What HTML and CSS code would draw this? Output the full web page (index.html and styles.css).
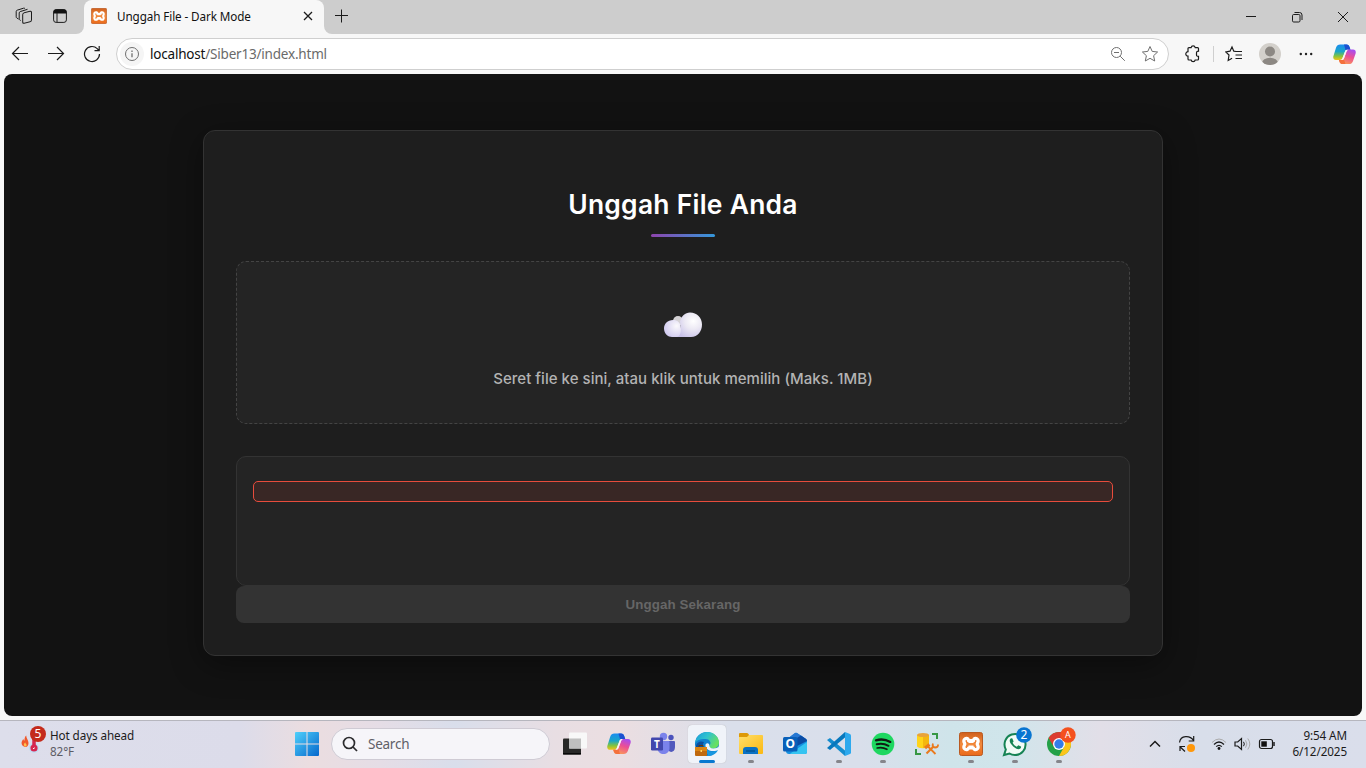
FILE: index.html
```html
<!DOCTYPE html>
<html lang="id">
<head>
<meta charset="utf-8">
<title>Unggah File - Dark Mode</title>
<link rel="stylesheet" href="styles.css">
</head>
<body>
<svg class="defs" width="0" height="0" aria-hidden="true">
  <defs>
    <linearGradient id="copA" x1="0" y1="0" x2="0" y2="1"><stop offset="0" stop-color="#1b8cf0"/><stop offset=".45" stop-color="#1aa6c8"/><stop offset=".75" stop-color="#86c43c"/><stop offset="1" stop-color="#f4c418"/></linearGradient>
    <linearGradient id="copB" x1=".7" y1="0" x2=".3" y2="1"><stop offset="0" stop-color="#a84cf0"/><stop offset=".45" stop-color="#ec4f94"/><stop offset="1" stop-color="#fb9c55"/></linearGradient>
    <linearGradient id="xam" x1="0" y1="0" x2="0" y2="1"><stop offset="0" stop-color="#cf5f1d"/><stop offset=".5" stop-color="#f28a3c"/><stop offset="1" stop-color="#ea6a1a"/></linearGradient>
    <linearGradient id="win" x1="0" y1="0" x2="1" y2="1"><stop offset="0" stop-color="#4fd0fb"/><stop offset="1" stop-color="#0667cc"/></linearGradient>
    <linearGradient id="edgeTop" x1="0" y1="0" x2="1" y2=".5"><stop offset="0" stop-color="#1a9bd8"/><stop offset=".5" stop-color="#2fc2cf"/><stop offset="1" stop-color="#68e060"/></linearGradient>
    <linearGradient id="fold" x1="0" y1="0" x2="1" y2="1"><stop offset="0" stop-color="#ffdf6b"/><stop offset="1" stop-color="#fbb811"/></linearGradient>
    <radialGradient id="cloudR" cx=".65" cy=".35" r=".75"><stop offset="0" stop-color="#fff"/><stop offset=".45" stop-color="#ece9f4"/><stop offset="1" stop-color="#c9c2e9"/></radialGradient>
    <radialGradient id="cloudL" cx=".7" cy=".35" r=".8"><stop offset="0" stop-color="#fbfafc"/><stop offset="1" stop-color="#cdc6ee"/></radialGradient>
    <symbol id="copilot" viewBox="0 0 24 24">
      <path d="M7.500 1.500H14c2 0 2.800 1.200 3.400 3l.8 2.500h-3.400c-1.400 0-2 .7-2.400 2L10 15.500c-.6 1.700-1.300 2.300-3 2.300H3C.8 17.800-.2 16 .4 13.700l2.800-9C4 2.500 5.200 1.500 7.500 1.500z" fill="url(#copA)"/>
      <path d="M11.500 1.500H14c2 0 2.800 1.200 3.400 3l.8 2.500h-3.400c-.8 0-1.300.2-1.700.6z" fill="#1c50d0"/>
      <path d="M16.500 22H10c-2 0-2.800-1.200-3.400-3l-.4-1.300h3c1.400 0 2-.7 2.400-2l2.400-6.500c.6-1.700 1.300-2.300 3-2.300h4c2.200 0 3.200 1.800 2.600 4.100l-2.800 8C20 21 18.800 22 16.500 22z" fill="url(#copB)"/>
      <path d="M10 22c-2 0-2.800-1.200-3.400-3l-.4-1.300h3c1 0 1.700-.4 2-1.200L13 22z" fill="#f4703c"/>
      <path d="M13 7.800c.5-.6 1-.8 2-.8h1.200c-1.200.3-1.800 1-2.200 2.200l-2.700 7.400c-.4.900-1 1.200-2.100 1.200H8.200c1-.3 1.500-1 1.800-2.200z" fill="#fbf4f6"/>
    </symbol>
    <symbol id="xampp" viewBox="0 0 24 24">
      <rect x=".5" y=".5" width="23" height="23" rx="2" fill="url(#xam)" stroke="#b95a22"/>
      <path d="M8.500 6.500c-2.600-.8-4.700 1.700-3 4.500q.7 1 0 2c-1.700 2.800.4 5.300 3 4.500q.7-.2 1-1.500h5q.3 1.300 1 1.500c2.600.8 4.700-1.700 3-4.500q-.7-1 0-2c1.700-2.800-.4-5.300-3-4.500q-.7.200-1 2.200h-5q-.3-2-1-2.200z" fill="none" stroke="#fff" stroke-width="3.200" stroke-linejoin="round"/>
      <path d="M9.500 9.500h5M9.500 15h5" stroke="#fff" stroke-width="3"/>
    </symbol>
  </defs>
</svg>

<header class="tabstrip">
  <div class="strip-left">
    <svg width="18" height="18" viewBox="0 0 18 18" class="ln"><rect x="7.700" y="5" width="8.800" height="10.500" rx="1.500" transform="skewY(-14) translate(0 3)"/><path d="M5.700 13.500l-1-.6q-.5-.4-.5-1V6q0-1 1-1.400l7.300-2.300M3.500 12l-1.700-1q-.6-.4-.6-1.200V4.500q0-1 1-1.300l6.300-2q.8-.2 1.500.3"/></svg>
    <svg width="16" height="16" viewBox="0 0 16 16"><rect x="1.600" y="1.600" width="12.800" height="12.800" rx="2.500" class="ln"/><path d="M1.500 5.500V4A2.500 2.500 0 014 1.500h8A2.500 2.500 0 0114.500 4v1.500z" fill="#111"/><path d="M5 5v9" class="ln"/></svg>
  </div>
  <div class="tab">
    <svg width="16" height="16"><use href="#xampp"/></svg>
    <span class="tab-title">Unggah File - Dark Mode</span>
    <svg width="10" height="10" viewBox="0 0 10 10" class="ln"><path d="M1 1l8 8M9 1L1 9" stroke-width="1.300"/></svg>
  </div>
  <svg class="plus ln" width="14" height="14" viewBox="0 0 14 14"><path d="M6.500 .5v13M0 6.500h13"/></svg>
  <div class="win-btns">
    <svg width="12" height="12" viewBox="0 0 12 12" class="ln"><path d="M1 5.500h10"/></svg>
    <svg width="12" height="12" viewBox="0 0 12 12" class="ln"><rect x="1.500" y="3.500" width="7.500" height="7.500" rx="1.200"/><path d="M3.500 1.500h5q2.500 0 2.500 2.500v5"/></svg>
    <svg width="12" height="12" viewBox="0 0 12 12" class="ln"><path d="M1 1l10 10M11 1L1 11"/></svg>
  </div>
</header>

<nav class="toolbar">
  <div class="nav-btns">
    <svg width="18" height="16" viewBox="0 0 18 16" class="ln"><path d="M17 7.500H1.500M8 1L1.500 7.500 8 14" stroke-width="1.200"/></svg>
    <svg width="18" height="16" viewBox="0 0 18 16" class="ln"><path d="M1 7.500h15.500M10 1l6.500 6.500L10 14" stroke-width="1.200"/></svg>
    <svg width="18" height="18" viewBox="0 0 18 18" class="ln"><path d="M16.500 9a7.500 7.500 0 11-2.300-5.400L16 5.500M16.200 1v4.700h-4.700" stroke-width="1.200"/></svg>
  </div>
  <div class="address">
    <span class="site-info"><svg width="16" height="16" viewBox="0 0 16 16" class="ln grey"><circle cx="8" cy="8" r="6.500"/><path d="M8 7.300v4M8 4.600v1.300" stroke-width="1.300"/></svg></span>
    <span class="url">localhost<span class="path">/Siber13/index.html</span></span>
    <svg width="16" height="16" viewBox="0 0 16 16" class="ln grey"><circle cx="6.500" cy="6.500" r="5"/><path d="M10.200 10.200l4.600 4.600M4 6.500h5"/></svg>
    <svg width="18" height="18" viewBox="0 0 18 18" class="ln grey"><path d="M9 1.500l2.200 4.900 5.400.6-4 3.700 1.100 5.300L9 13.300 4.300 16l1.100-5.300-4-3.700 5.400-.6z" stroke-linejoin="round"/></svg>
  </div>
  <div class="tools">
    <svg width="18" height="18" viewBox="0 0 18 18" class="ln"><path d="M4 3.500q0-.9.900-.9h2.200a2.100 2.100 0 014.100 0h2.400q.9 0 .9.900v2.700a1.600 1.600 0 00-2 1.500v2.200a1.600 1.600 0 002 1.500v2.700q0 .9-.9.900h-2.400a2.100 2.100 0 01-4.100 0H4.900q-.9 0-.9-.9v-3a2.200 2.200 0 010-4.400z" stroke-width="1.200"/></svg>
    <i class="divider"></i>
    <svg width="18" height="18" viewBox="0 0 18 18" class="ln"><path d="M11 6.500L8.800 6.200 7 2 5 6.200l-4.300.7L4 10l-.8 5.500 3.900-2.200M10 6.500h7M10.500 10H17M10.500 13.500H17" stroke-width="1.200"/></svg>
    <svg width="22" height="22" viewBox="0 0 22 22"><clipPath id="av"><circle cx="11" cy="11" r="11"/></clipPath><circle cx="11" cy="11" r="11" fill="#d3d0cb"/><g fill="#8c8883" clip-path="url(#av)"><circle cx="11" cy="8.500" r="5"/><ellipse cx="11" cy="20" rx="8" ry="5.300"/></g></svg>
    <svg width="14" height="4" viewBox="0 0 14 4" fill="#222"><circle cx="1.800" cy="2" r="1.200"/><circle cx="7" cy="2" r="1.200"/><circle cx="12.200" cy="2" r="1.200"/></svg>
    <svg width="23" height="23"><use href="#copilot"/></svg>
  </div>
</nav>

<main class="viewport">
  <section class="card">
    <h1>Unggah File Anda</h1>
    <div class="dropzone">
      <svg width="38" height="26" viewBox="0 0 38 26"><circle cx="14" cy="9" r="5" fill="#d5d2d5"/><path d="M8 25C4 25 0 21.500 0 16.500c0-4.500 3.500-8.500 9-8.500 4 0 8 2.500 8 8.500l1 8.500z" fill="url(#cloudL)"/><path d="M13 25c3-1 4-4 3.800-8L16 9.500C17.500 4 21 .5 26 .5c7 0 12 5 12 12C38 19 34 25 27 25z" fill="url(#cloudR)"/></svg>
      <p>Seret file ke sini, atau klik untuk memilih (Maks. 1MB)</p>
    </div>
    <div class="file-info"><div class="error"></div></div>
    <button class="upload" disabled>Unggah Sekarang</button>
  </section>
</main>

<footer class="taskbar">
  <div class="weather">
    <svg width="28" height="28" viewBox="0 0 28 28"><path d="M5.500 21C.5 20 .8 15.500 3.500 13c.1 1 .4 1.500 1 1.500C4.500 12 5 10.500 6.200 9.500c0 3 2.300 4.500 2.300 7.500 0 2-1 4-3 4z" fill="#f0592b"/><path d="M5.300 20.500c-2-.5-1.800-3 0-4 .2 1.500 1.500 1.500 1.300 2.800-.1.800-.6 1.200-1.300 1.200z" fill="#ffc14d"/><circle cx="14" cy="22" r="5" fill="#bfdcf4"/><path d="M14 11v11" stroke="#d6254f" stroke-width="3.500"/><circle cx="14" cy="22" r="3.600" fill="#d6254f"/><path d="M13 22.800l1.800-1" stroke="#fff"/><circle cx="18" cy="8" r="8" fill="#c42b1c"/><text x="18" y="12.200" class="badge-n">5</text></svg>
    <div class="weather-text"><b>Hot days ahead</b><span>82°F</span></div>
  </div>
  <svg class="start" width="24" height="24" viewBox="0 0 24 24"><path d="M0 1q0-1 1-1h10.500v11.500H0zM12.500 0H23q1 0 1 1v10.500H12.500zM0 12.500h11.500V24H1q-1 0-1-1zM12.500 12.500H24V23q0 1-1 1H12.500z" fill="url(#win)"/></svg>
  <div class="search"><svg width="16" height="16" viewBox="0 0 16 16" fill="none" stroke="#2b2b2d" stroke-width="1.700"><circle cx="7" cy="7" r="5.500"/><path d="M11 11l4 4"/></svg><span>Search</span></div>
  <div class="apps">
    <span class="app"><svg width="24" height="24" viewBox="0 0 24 24"><rect x="0" y="6.500" width="18" height="16" rx="1" fill="#282827"/><path d="M0 21h18v1.500H0z" fill="#080808"/><rect x="6" y=".5" width="18" height="16" rx="1" fill="#f8f8f8"/><path d="M6 6.500h12v10H6z" fill="#bfbfbf"/></svg></span>
    <span class="app"><svg width="24" height="24"><use href="#copilot"/></svg></span>
    <span class="app"><svg width="24" height="24" viewBox="0 0 24 24"><circle cx="20" cy="5.500" r="2.700" fill="#4b53bc"/><path d="M16 9h7q1 0 1 1v5c0 7-8 6-8 0z" fill="#5159bd"/><circle cx="12.500" cy="4.500" r="3.700" fill="#7b83eb"/><path d="M7 9h10.500q1 0 1 1v6c0 8-12 8-12 0z" fill="#7b83eb"/><rect y="5.500" width="12" height="13" rx="1.200" fill="#4248ae"/><text x="6" y="15.500" class="logo-letter" font-size="10">T</text></svg></span>
    <span class="app active"><svg width="24" height="24" viewBox="0 0 24 24"><circle cx="12" cy="12" r="12" fill="#1280cf"/><path d="M0 11C1 4 6 0 12 0c7 0 12 5 12 10.500 0 4-3 6-6.500 6-3 0-4.500-1.500-3-3 2.500-3 0-6.500-4-6.500C6 6.500 2 8 0 11z" fill="url(#edgeTop)"/><path d="M9 10c-3 5 0 10 6 12-5 3-12 1-14-5-1-5 3-9 8-7z" fill="#0b4fa0"/><path d="M11 11c-3 6 3 11 12 7-2 4-6 6-10 6l-2-5q-3-4 0-8z" fill="#1996df"/><path d="M10.800 12c1.500-1.500 3.500-.5 3.500 1 0 2 1 3.500 4 3.500 2.500 0 4.500-.7 5.500-2v3c-2 1.600-8 2.600-11 0-2-1.500-3-3.900-2-5.500z" fill="#f0f3f9"/><rect x="0" y="15" width="12" height="9" rx="1" fill="#bf690f"/><path d="M0 15h12v4H0z" fill="#db8514"/><path d="M4 15v-1.500h4V15" fill="none" stroke="#673809"/><path d="M5.500 18h1.500v2H5.500z" fill="#ffd267"/></svg></span>
    <span class="app run"><svg width="24" height="24" viewBox="0 0 24 24"><path d="M0 2q0-1 1-1h7q1 0 2 1.500V6H0z" fill="#dd9908"/><path d="M0 5h8l2-2h13q1 0 1 1v17q0 1-1 1H1q-1 0-1-1z" fill="url(#fold)"/><path d="M4 22v-4q0-3 3-3h9q3 0 3 3v4z" fill="#0b72c4"/><path d="M7 19h9" stroke="#075795" stroke-width="1.500"/></svg></span>
    <span class="app"><svg width="24" height="24" viewBox="0 0 24 24"><path d="M3 8l9-7q1-.6 2 0l9 6q1 .6 1 2v11q0 2-2 2H6q-3 0-3-3z" fill="#1490e0"/><path d="M4 7l8-6q1-.6 2 0l9 6-9 5z" fill="#2877d2"/><path d="M9 9l9-5.500 5 3.500q1 .6 1 2l-10 5z" fill="#0b4ca5"/><path d="M8 21l16-11v10q0 2-2 2H7z" fill="#35c4f1"/><rect y="5" width="14.500" height="14.500" rx="1.500" fill="#0960b9"/><text x="7.200" y="16.200" class="logo-letter" font-size="12">O</text></svg></span>
    <span class="app run"><svg width="24" height="24" viewBox="0 0 24 24"><path d="M0 8l3-2 15 12.500V24z" fill="#158dcf"/><path d="M0 16l3 2L18 5.500V0z" fill="#0878bd"/><path d="M18 0l5 2q1 .5 1 1.500v17q0 1-1 1.500l-5 2z" fill="#2da9ee"/></svg></span>
    <span class="app run"><svg width="24" height="24" viewBox="0 0 24 24"><circle cx="12" cy="12" r="11.300" fill="#1ed760"/><g fill="none" stroke="#101b13" stroke-linecap="round"><path d="M5 8.300c5-1.400 10-.8 14.300 1.600" stroke-width="2.300"/><path d="M5.700 12.300c4-1 8-.6 11.800 1.500" stroke-width="2"/><path d="M6.200 16c3.500-.8 6.500-.5 9.700 1.300" stroke-width="1.700"/></g></svg></span>
    <span class="app"><svg width="24" height="24" viewBox="0 0 24 24"><path d="M2 3v11c0 3 12 3 12 0V3z" fill="#ffd419"/><path d="M8 3v13c3 0 6-.7 6-2V3z" fill="#f4b70f"/><ellipse cx="8" cy="3" rx="6" ry="2" fill="#e8a33a"/><path d="M17 2h5v5M1 17v5h5" fill="none" stroke="#379744" stroke-width="2"/><g fill="none" stroke="#ea7a1d"><path d="M11.500 21.500l7.500-7.500" stroke-width="2.200"/><path d="M20.500 22L13 14.500" stroke-width="1.800"/><path d="M10 16l4.500-3.500" stroke-width="3"/><path d="M18 11.500q-1.300 4 2 4t3-3" stroke-width="1.800"/></g></svg></span>
    <span class="app run"><svg width="24" height="24"><use href="#xampp"/></svg></span>
    <span class="app run"><svg width="38" height="38" viewBox="-7 -7 38 38"><path d="M1 23l1.800-5.500A10.500 10.500 0 1112 23c-2 0-4-.5-5.500-1.500z" fill="#f1fbf6" stroke="#168354" stroke-width="2"/><path d="M8.300 6.300c-1.800.7-2.500 3 .2 6.200 3.200 4 6.500 5.400 8.500 4.300 1-.6 1.300-1.800 1-2.300l-2.700-1.300-1.500 1.500c-1.700-.6-3.300-2-4.200-3.900l1-1.300-1.200-2.900z" fill="#168354"/><circle cx="21" cy="3" r="7.800" fill="#0875d1"/><text x="21" y="7" class="badge-n">2</text></svg></span>
    <span class="app run"><svg width="38" height="38" viewBox="-7 -7 38 38"><circle cx="12" cy="12" r="12" fill="#24a148"/><path d="M12 12L1.600 6A12 12 0 0122.400 6z" fill="#dc3c31"/><path d="M12 12l10.400-6A12 12 0 0112 24z" fill="#fbc51a"/><path d="M1.600 6L12 24l5-9-5-3-5 3z" fill="#24a148"/><path d="M1.600 6h15L12 12l-5 3z" fill="#dc3c31"/><circle cx="12" cy="12" r="6" fill="#fff"/><circle cx="12" cy="12" r="4.700" fill="#347de8"/><circle cx="21" cy="3" r="7.700" fill="#f4511e"/><text x="21" y="6.300" class="badge-n small">A</text></svg></span>
  </div>
  <div class="tray">
    <svg width="12" height="8" viewBox="0 0 12 8" class="ln"><path d="M1 6.500l5-5 5 5" stroke-width="1.500"/></svg>
    <svg width="18" height="18" viewBox="0 0 18 18" class="ln"><path d="M1.500 7.500C2.500 0 12 0 15.500 5.500M15.700 1v5h-5M7 16.500L2 11.700M2 16v-4.500h5" stroke-width="1.200"/><circle cx="13" cy="13" r="4" fill="#ff980b" stroke="none"/></svg>
    <svg width="16" height="14" viewBox="0 0 16 14" class="ln"><path d="M1 5.500Q8-1.500 15 5.500" stroke="#aaa"/><path d="M3 7.500q5-5 10 0M5.200 9.700q2.800-2.800 5.600 0" stroke-width="1.200"/><circle cx="8" cy="11.500" r="1.400" fill="#111" stroke="none"/></svg>
    <svg width="18" height="14" viewBox="0 0 18 14" class="ln"><path d="M1 5h2.700L7.500 1.500v11L3.700 9H1z" stroke-width="1.200"/><path d="M9.500 4.800q1.700 2.200 0 4.400"/><path d="M11.500 3.300q2.800 3.700 0 7.400M13.800 1.500q4 5.500 0 11" stroke="#aaa"/></svg>
    <svg width="18" height="12" viewBox="0 0 18 12" class="ln"><rect x="1.500" y="1.500" width="13" height="9" rx="2" stroke-width="1.200"/><rect x="3.300" y="3.300" width="5.500" height="5.400" fill="#111" stroke="none"/><path d="M16 4v4" stroke-width="1.500"/></svg>
    <div class="clock"><span>9:54 AM</span><span>6/12/2025</span></div>
  </div>
</footer>
</body>
</html>
```
FILE: styles.css
```css
* { box-sizing: border-box; }
body {
  margin: 0;
  width: 1366px;
  height: 768px;
  overflow: hidden;
  display: flex;
  flex-direction: column;
  background: #f7f7f7;
  font-family: "Noto Sans", "Open Sans", sans-serif;
  font-size: 12px;
  color: #1b1b1b;
}
svg { display: block; flex: none; }
.defs { position: absolute; }
.ln { fill: none; stroke: #1b1b1b; }
.grey { stroke: #6f6f6f; }

.tabstrip { height: 34px; flex: none; display: flex; align-items: center; background: linear-gradient(90deg, #f7f7f7 340px, #cdcdcd 340px); }
.strip-left {
  width: 84px; height: 34px; padding: 0 0 2px 15px;
  display: flex; align-items: center; gap: 19px;
  background: #cdcdcd; border-bottom-right-radius: 8px;
}
.tab {
  width: 240px; height: 34px; padding: 0 11px 2px 7px;
  display: flex; align-items: center;
  background: #f7f7f7; border-radius: 8px 8px 0 0;
  box-shadow: 0 -8px 0 #cdcdcd;
}
.tab-title { flex: 1; padding-left: 10px; font-size: 11.700px; letter-spacing: -.1px; white-space: nowrap; color: #111; }
.plus { width: 42px; height: 34px; padding: 9px 17px 11px 11px; background: #cdcdcd; border-bottom-left-radius: 8px; }
.win-btns { margin-left: auto; display: flex; gap: 34px; padding-right: 17px; }

.toolbar { height: 40px; flex: none; display: flex; align-items: center; }
.nav-btns { width: 116px; padding-left: 11px; display: flex; align-items: center; gap: 18px; }
.address {
  width: 1053px; height: 32px; padding: 0 9px 0 3px;
  display: flex; align-items: center;
  background: #fff; border: 1px solid #cfcfcf; border-radius: 16px;
}
.site-info { width: 24px; height: 24px; display: flex; align-items: center; justify-content: center; background: #f5f5f5; border-radius: 12px; }
.url { flex: 1; padding-left: 6px; font-size: 13.500px; letter-spacing: -.2px; color: #111; }
.path { color: #6a6a6a; }
.address svg + svg { margin-left: 15px; }
.tools { display: flex; align-items: center; padding-left: 15px; }
.divider { width: 1px; height: 16px; margin: 0 11px; background: #cfcfcf; }
.tools svg + svg { margin-left: 16px; }
.tools svg:nth-of-type(4) { margin-left: 18px; }
.tools svg:nth-of-type(5) { margin-left: 20px; }

.viewport {
  width: 1358px; height: 642px; margin: 0 4px; padding-top: 56px; flex: none;
  display: flex; justify-content: center; align-items: flex-start;
  background: #121212; border-radius: 8px; overflow: hidden;
}
.card {
  width: 960px; height: 526px; padding: 55px 32px 32px;
  display: flex; flex-direction: column;
  background: #1e1e1e; border: 1px solid #333; border-radius: 12px;
  box-shadow: 0 8px 32px rgba(0, 0, 0, .4);
}
h1 {
  margin: 0 0 24px; height: 51px;
  display: flex; flex-direction: column; align-items: center; justify-content: space-between;
  font: 600 26.400px/36px Inter, sans-serif; letter-spacing: .28px; color: #fff;
}
h1::after { content: ""; width: 64px; height: 3px; border-radius: 2px; background: linear-gradient(90deg, #8e44ad, #3498db); }
.dropzone {
  height: 163px; padding-top: 50px;
  display: flex; flex-direction: column; align-items: center;
  background: #242424; border: 1px dashed #444; border-radius: 10px;
}
.dropzone p { margin: 30px 0 0; font: 500 15px/22px Inter, sans-serif; letter-spacing: .03px; color: #b3b3b3; white-space: nowrap; }
.file-info { height: 130px; margin-top: 32px; padding: 24px 16px; background: #242424; border: 1px solid #333; border-radius: 10px; }
.error { height: 21px; background: #392725; border: 1px solid #e74c3c; border-radius: 5px; }
.upload {
  height: 37px; padding: 0; border: 0; border-radius: 8px;
  background: #333; color: #666;
  font: 700 13.333px "Liberation Sans", Arial, sans-serif; letter-spacing: .1px;
}

.taskbar {
  height: 48px; margin-top: 4px; padding-bottom: 1px; flex: none;
  display: flex; align-items: center;
  border-top: 1px solid #b6b6be;
  background: linear-gradient(90deg, #dddeeb 0, #dcdcea 240px, #ebdde0 310px, #e5dde6 380px, #d9deeb 455px, #e8dee3 555px, #ebdee1 620px, #dadfeb 730px, #d9dfeb 860px, #cfe4ea 950px, #d0e5eb 1010px, #e2dfe8 1100px, #d8deea 1200px, #dadeeb 100%);
}
.weather { width: 294px; padding-left: 20px; display: flex; align-items: center; gap: 2px; }
.weather svg { margin-top: -8px; }
.weather-text, .clock { display: flex; flex-direction: column; line-height: 16px; font-size: 11.700px; letter-spacing: -.1px; white-space: nowrap; padding-bottom: 2px; }
.weather-text b { font-weight: 400; }
.weather-text span { color: #5d5c65; }
.start { margin-left: 1px; }
.search {
  width: 219px; height: 32px; margin-left: 12px; padding-left: 10px;
  display: flex; align-items: center; gap: 10px;
  background: #f6f5f9; border: 1px solid #cfcbd4; border-radius: 16px;
  font-size: 13.500px; letter-spacing: -.25px; color: #606067;
}
.search span { padding-bottom: 1px; }
.apps { display: flex; margin-left: 3px; }
.app { width: 44px; height: 46px; position: relative; display: flex; align-items: center; justify-content: center; }
.app svg { position: relative; }
.active::before { content: ""; position: absolute; left: 3px; top: 4px; width: 38px; height: 38px; border-radius: 4px; background: #f0f3f9; box-shadow: 0 0 1px #aaa; }
.run::after, .active::after { content: ""; position: absolute; left: 19px; bottom: 4px; width: 6px; height: 3px; border-radius: 2px; background: #85858b; }
.active::after { left: 14px; width: 16px; background: #0878d0; }
.badge-n { font: 12px "Noto Sans", sans-serif; fill: #fff; text-anchor: middle; }
.badge-n.small { font-size: 9px; }
.logo-letter { font-family: "Noto Sans", sans-serif; font-weight: 700; fill: #fff; text-anchor: middle; }
.tray { flex: 1; display: flex; align-items: center; padding: 0 19px 0 68px; }
.tray svg:nth-of-type(2) { margin-left: 17px; }
.tray svg:nth-of-type(3) { margin-left: 15px; }
.tray svg:nth-of-type(4) { margin-left: 7px; }
.tray svg:nth-of-type(5) { margin-left: 6px; }
.clock { margin-left: auto; align-items: flex-end; }
```
